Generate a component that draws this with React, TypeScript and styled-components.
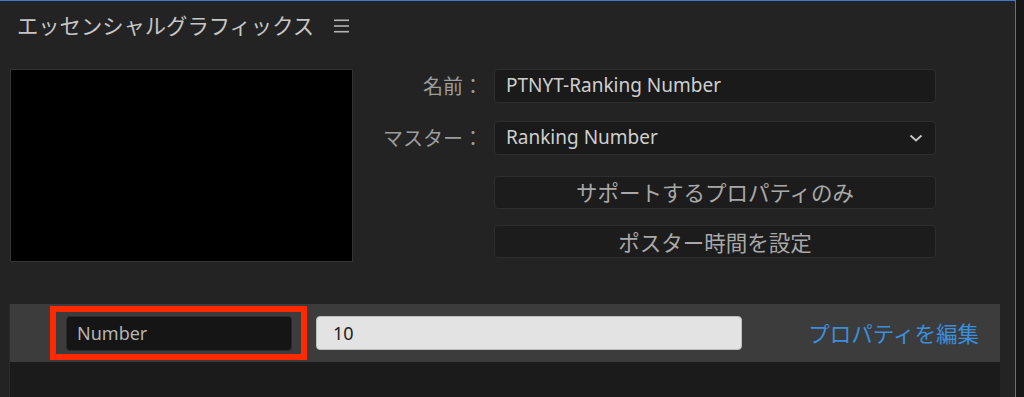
import React from 'react'
import styled, { createGlobalStyle } from 'styled-components'

const GlobalStyle = createGlobalStyle`
  html, body {
    margin: 0;
    padding: 0;
    background: #161616;
    overflow: hidden;
  }
  * {
    box-sizing: border-box;
  }
`

const JP = `"Noto Sans CJK JP", "Noto Sans", sans-serif`
const LATIN = `"Noto Sans", "Noto Sans CJK JP", sans-serif`

const App = () => {
  return (
    <>
      <GlobalStyle />
      <Screen>
        <Panel>
          <Header>
            <Title>エッセンシャルグラフィックス</Title>
            <MenuIcon width="15" height="14" viewBox="0 0 15 14">
              <rect x="0" y="0.5" width="15" height="1.6" fill="#b4b4b4" />
              <rect x="0" y="6.2" width="15" height="1.6" fill="#b4b4b4" />
              <rect x="0" y="11.9" width="15" height="1.6" fill="#b4b4b4" />
            </MenuIcon>
          </Header>

          <Top>
            <Preview />
            <Form>
              <Label>名前：</Label>
              <Field>
                <FieldText>PTNYT-Ranking Number</FieldText>
              </Field>

              <Label>マスター：</Label>
              <Field>
                <FieldText>Ranking Number</FieldText>
                <svg width="14" height="8" viewBox="0 0 14 8">
                  <polyline points="1.5,1.5 7,6.5 12.5,1.5" fill="none" stroke="#c8c8c8" strokeWidth="1.8" />
                </svg>
              </Field>

              <span />
              <Button $spaced>サポートするプロパティのみ</Button>

              <span />
              <Button>ポスター時間を設定</Button>
            </Form>
          </Top>

          <List>
            <PropRow>
              <Highlight>
                <NameField>Number</NameField>
              </Highlight>
              <ValueField>10</ValueField>
              <EditLink>プロパティを編集</EditLink>
            </PropRow>
          </List>
        </Panel>
      </Screen>
    </>
  )
}

export default App

const Screen = styled.div`
  width: 1024px;
  height: 397px;
  display: flex;
  background: #161616;
  overflow: hidden;
`

const Panel = styled.div`
  width: 1016px;
  height: 100%;
  background: #232323;
  border-top: 1px solid #3a7bd0;
  border-right: 1px solid #3a7bd0;
  display: flex;
  flex-direction: column;
`

const Header = styled.div`
  height: 48px;
  padding-left: 17px;
  display: flex;
  align-items: center;
  gap: 20px;
  margin-bottom: 20px;
`

const Title = styled.h1`
  margin: 0;
  font-family: ${JP};
  font-size: 21.3px;
  font-weight: 400;
  color: #c6c6c6;
  line-height: 1;
`

const MenuIcon = styled.svg`
  display: block;
  margin-top: 2px;
`

const Top = styled.div`
  display: flex;
  padding-left: 10px;
`

const Preview = styled.div`
  width: 343px;
  height: 193px;
  background: #000;
  border: 1px solid #343434;
`

const Form = styled.div`
  display: grid;
  grid-template-columns: 130px 442px;
  grid-auto-rows: 33px;
  column-gap: 11px;
  row-gap: 19px;
  align-items: center;
`

const Label = styled.div`
  font-family: ${JP};
  font-size: 20px;
  color: #9c9c9c;
  text-align: right;
  line-height: 1;
`

const Field = styled.div`
  height: 34px;
  display: flex;
  align-items: center;
  justify-content: space-between;
  padding: 0 12px 0 11px;
  background: #1a1a1a;
  border: 1px solid #2e2e2e;
  border-radius: 4px;
`

const FieldText = styled.span`
  font-family: ${LATIN};
  font-size: 19px;
  color: #cfcfcf;
  line-height: 1;
`

const Button = styled.div<{ $spaced?: boolean }>`
  height: 33px;
  margin-top: ${(p) => (p.$spaced ? '5px' : '0')};
  display: flex;
  align-items: center;
  justify-content: center;
  background: #1c1c1c;
  border: 1px solid #2e2e2e;
  border-radius: 4px;
  font-family: ${JP};
  font-size: 21.5px;
  color: #a8a8a8;
  line-height: 1;
`

const List = styled.div`
  flex: 1;
  margin: 42px 15px 0 9px;
  background: #1b1b1b;
  border-left: 1px solid #2b2b2b;
`

const PropRow = styled.div`
  height: 58px;
  display: flex;
  align-items: center;
  padding: 0 21px 0 40px;
  background: #3c3c3c;
`

const Highlight = styled.div`
  width: 257px;
  height: 54px;
  border: 6px solid #ff2a00;
  display: flex;
  align-items: center;
  padding-left: 10px;
`

const NameField = styled.div`
  width: 226px;
  height: 35px;
  display: flex;
  align-items: center;
  padding-left: 10px;
  background: #151515;
  border: 1px solid #2a2a2a;
  border-radius: 4px;
  font-family: ${LATIN};
  font-size: 18px;
  color: #b4b4b4;
`

const ValueField = styled.div`
  width: 426px;
  height: 34px;
  margin-left: 9px;
  display: flex;
  align-items: center;
  padding-left: 16px;
  background: #e3e3e3;
  border: 1px solid #bdbdbd;
  border-radius: 4px;
  font-family: ${LATIN};
  font-size: 18px;
  color: #1e1e1e;
`

const EditLink = styled.div`
  margin-left: auto;
  font-family: ${JP};
  font-size: 21.5px;
  color: #3b8fdd;
  line-height: 1;
`
